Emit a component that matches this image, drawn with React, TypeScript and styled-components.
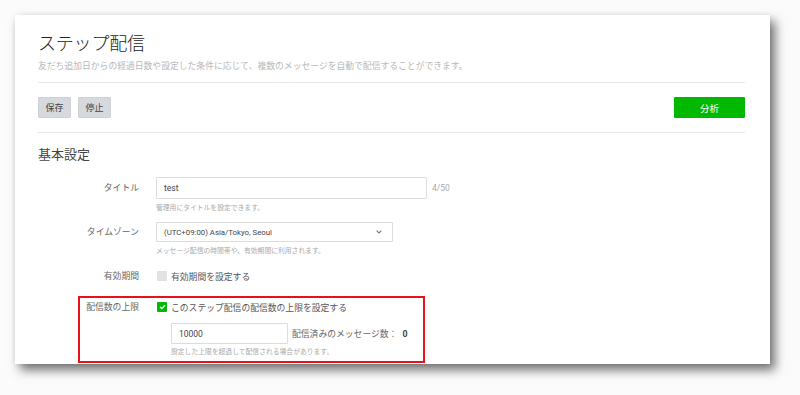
import React, {ReactElement} from 'react';
import styled, {createGlobalStyle} from 'styled-components';

const GlobalStyle = createGlobalStyle`
    html, body {
        margin: 0;
        padding: 0;
        background: #fbfbfb;
    }
    body {
        font-family: Roboto, "Noto Sans CJK JP", sans-serif;
        color: #333;
    }
`;

type RowProps = {
    label: string;
    labelWidth?: number;
    labelHeight: number;
    top: number;
    children: React.ReactNode;
};

function FormRow({label, labelWidth = 101, labelHeight, top, children}: RowProps): ReactElement {
    return (
        <Row $labelWidth={labelWidth} $top={top}>
            <Label $height={labelHeight}>{label}</Label>
            <Field>{children}</Field>
        </Row>
    );
}

export default function App(): ReactElement {
    return (
        <>
            <GlobalStyle />
            <Page>
                <Card>
                    <Title>ステップ配信</Title>
                    <Lead>友だち追加日からの経過日数や設定した条件に応じて、複数のメッセージを自動で配信することができます。</Lead>
                    <Divider $top={9} />
                    <Toolbar>
                        <ButtonGroup>
                            <GreyButton>保存</GreyButton>
                            <GreyButton>停止</GreyButton>
                        </ButtonGroup>
                        <GreenButton>分析</GreenButton>
                    </Toolbar>
                    <Divider $top={14} />
                    <SectionTitle>基本設定</SectionTitle>

                    <FormRow label="タイトル" labelHeight={22} top={13}>
                        <InputLine>
                            <TextBox $width={271} $height={22}>test</TextBox>
                            <Counter>4/50</Counter>
                        </InputLine>
                        <Help>管理用にタイトルを設定できます。</Help>
                    </FormRow>

                    <FormRow label="タイムゾーン" labelHeight={20} top={9}>
                        <Select>
                            <span>(UTC+09:00) Asia/Tokyo, Seoul</span>
                            <svg width="6" height="4" viewBox="0 0 6 4">
                                <path d="M0.6 0.6 L3 3 L5.4 0.6" fill="none" stroke="#777" strokeWidth="1.1" />
                            </svg>
                        </Select>
                        <Help>メッセージ配信の時間帯や、有効期間に利用されます。</Help>
                    </FormRow>

                    <FormRow label="有効期間" labelHeight={14} top={13}>
                        <CheckLine>
                            <CheckBox $checked={false} />
                            <CheckText>有効期間を設定する</CheckText>
                        </CheckLine>
                    </FormRow>

                    <Highlight>
                        <FormRow label="配信数の上限" labelWidth={59} labelHeight={14} top={0}>
                            <CheckLine>
                                <CheckBox $checked>
                                    <svg width="7" height="6" viewBox="0 0 7 6">
                                        <path d="M1 3 L2.8 4.6 L6 1.2" fill="none" stroke="#fff" strokeWidth="1.3" />
                                    </svg>
                                </CheckBox>
                                <CheckText>このステップ配信の配信数の上限を設定する</CheckText>
                            </CheckLine>
                            <Indent>
                                <InputLine>
                                    <TextBox $width={117} $height={21}>10000</TextBox>
                                    <SentCount>
                                        配信済みのメッセージ数： <b>0</b>
                                    </SentCount>
                                </InputLine>
                                <Help $top={3}>設定した上限を超過して配信される場合があります。</Help>
                            </Indent>
                        </FormRow>
                    </Highlight>
                </Card>
            </Page>
        </>
    );
}

const Page = styled.div`
    width: 800px;
    height: 395px;
    padding: 15px 0 0 15px;
    box-sizing: border-box;
    overflow: hidden;
`;

const Card = styled.div`
    width: 755px;
    height: 349px;
    box-sizing: border-box;
    padding: 17px 25px 0 23px;
    background: #fff;
    overflow: hidden;
    box-shadow: 5px 6px 10px rgba(0, 0, 0, 0.55), 0 0 5px rgba(0, 0, 0, 0.06);
`;

const Title = styled.h1`
    margin: 0;
    font-size: 18px;
    line-height: 24px;
    font-weight: 300;
    color: #222;
    letter-spacing: -0.2px;
`;

const Lead = styled.p`
    margin: 4px 0 0;
    font-size: 8.8px;
    line-height: 13px;
    color: #b8b8b8;
`;

const Divider = styled.hr<{$top: number}>`
    margin: ${({$top}) => $top}px 0 0;
    border: none;
    border-top: 1px solid #e8e8e8;
    height: 0;
`;

const Toolbar = styled.div`
    display: flex;
    justify-content: space-between;
    align-items: center;
    margin-top: 14px;
`;

const ButtonGroup = styled.div`
    display: flex;
    gap: 7px;
`;

const GreyButton = styled.button`
    width: 33px;
    height: 21px;
    padding: 0;
    border: 1px solid #cdd1d5;
    border-radius: 1px;
    background: #d6d9dd;
    color: #444;
    font-family: inherit;
    font-size: 9px;
`;

const GreenButton = styled.button`
    width: 71px;
    height: 21px;
    padding: 0;
    border: none;
    border-radius: 1px;
    background: #00b900;
    color: #fff;
    font-family: inherit;
    font-size: 9.5px;
`;

const SectionTitle = styled.h2`
    margin: 13px 0 0;
    font-size: 13px;
    line-height: 18px;
    font-weight: 400;
    color: #444;
`;

const Row = styled.div<{$labelWidth: number; $top: number}>`
    display: grid;
    grid-template-columns: ${({$labelWidth}) => $labelWidth}px 1fr;
    column-gap: 17px;
    margin-top: ${({$top}) => $top}px;
`;

const Label = styled.div<{$height: number}>`
    text-align: right;
    font-size: 8.8px;
    line-height: ${({$height}) => $height}px;
    color: #666;
    white-space: nowrap;
`;

const Field = styled.div`
    display: flex;
    flex-direction: column;
    align-items: flex-start;
`;

const InputLine = styled.div`
    display: flex;
    align-items: center;
    gap: 5px;
`;

const TextBox = styled.div<{$width: number; $height: number}>`
    width: ${({$width}) => $width}px;
    height: ${({$height}) => $height}px;
    box-sizing: border-box;
    padding: 0 7px;
    border: 1px solid #dcdcdc;
    border-radius: 1px;
    display: flex;
    align-items: center;
    font-size: 8.5px;
    color: #444;
`;

const Counter = styled.span`
    font-size: 8.5px;
    color: #aaa;
`;

const Help = styled.div<{$top?: number}>`
    margin-top: ${({$top}) => $top ?? 4}px;
    font-size: 6.8px;
    line-height: 10px;
    color: #aaa;
`;

const Select = styled.div`
    width: 237px;
    height: 20px;
    box-sizing: border-box;
    padding: 0 10px 0 7px;
    border: 1px solid #dcdcdc;
    border-radius: 1px;
    display: flex;
    justify-content: space-between;
    align-items: center;
    font-size: 7.8px;
    color: #444;
`;

const CheckLine = styled.div`
    display: flex;
    align-items: center;
    gap: 4px;
    height: 14px;
`;

const CheckBox = styled.span<{$checked: boolean}>`
    width: 10px;
    height: 10px;
    margin-left: 1px;
    box-sizing: border-box;
    border-radius: 1px;
    display: flex;
    align-items: center;
    justify-content: center;
    background: ${({$checked}) => ($checked ? '#00b900' : '#e2e2e2')};
`;

const CheckText = styled.span`
    font-size: 8.8px;
    color: #555;
`;

const Highlight = styled.div`
    margin: 13px 0 0 40px;
    width: 347px;
    box-sizing: border-box;
    border: 2px solid #e8101a;
    padding: 2px 0 4px;
`;

const Indent = styled.div`
    margin: 9px 0 0 15px;
`;

const SentCount = styled.span`
    margin-left: -1px;
    font-size: 8.8px;
    color: #666;

    b {
        margin-left: 3px;
        color: #444;
        font-weight: 700;
    }
`;
